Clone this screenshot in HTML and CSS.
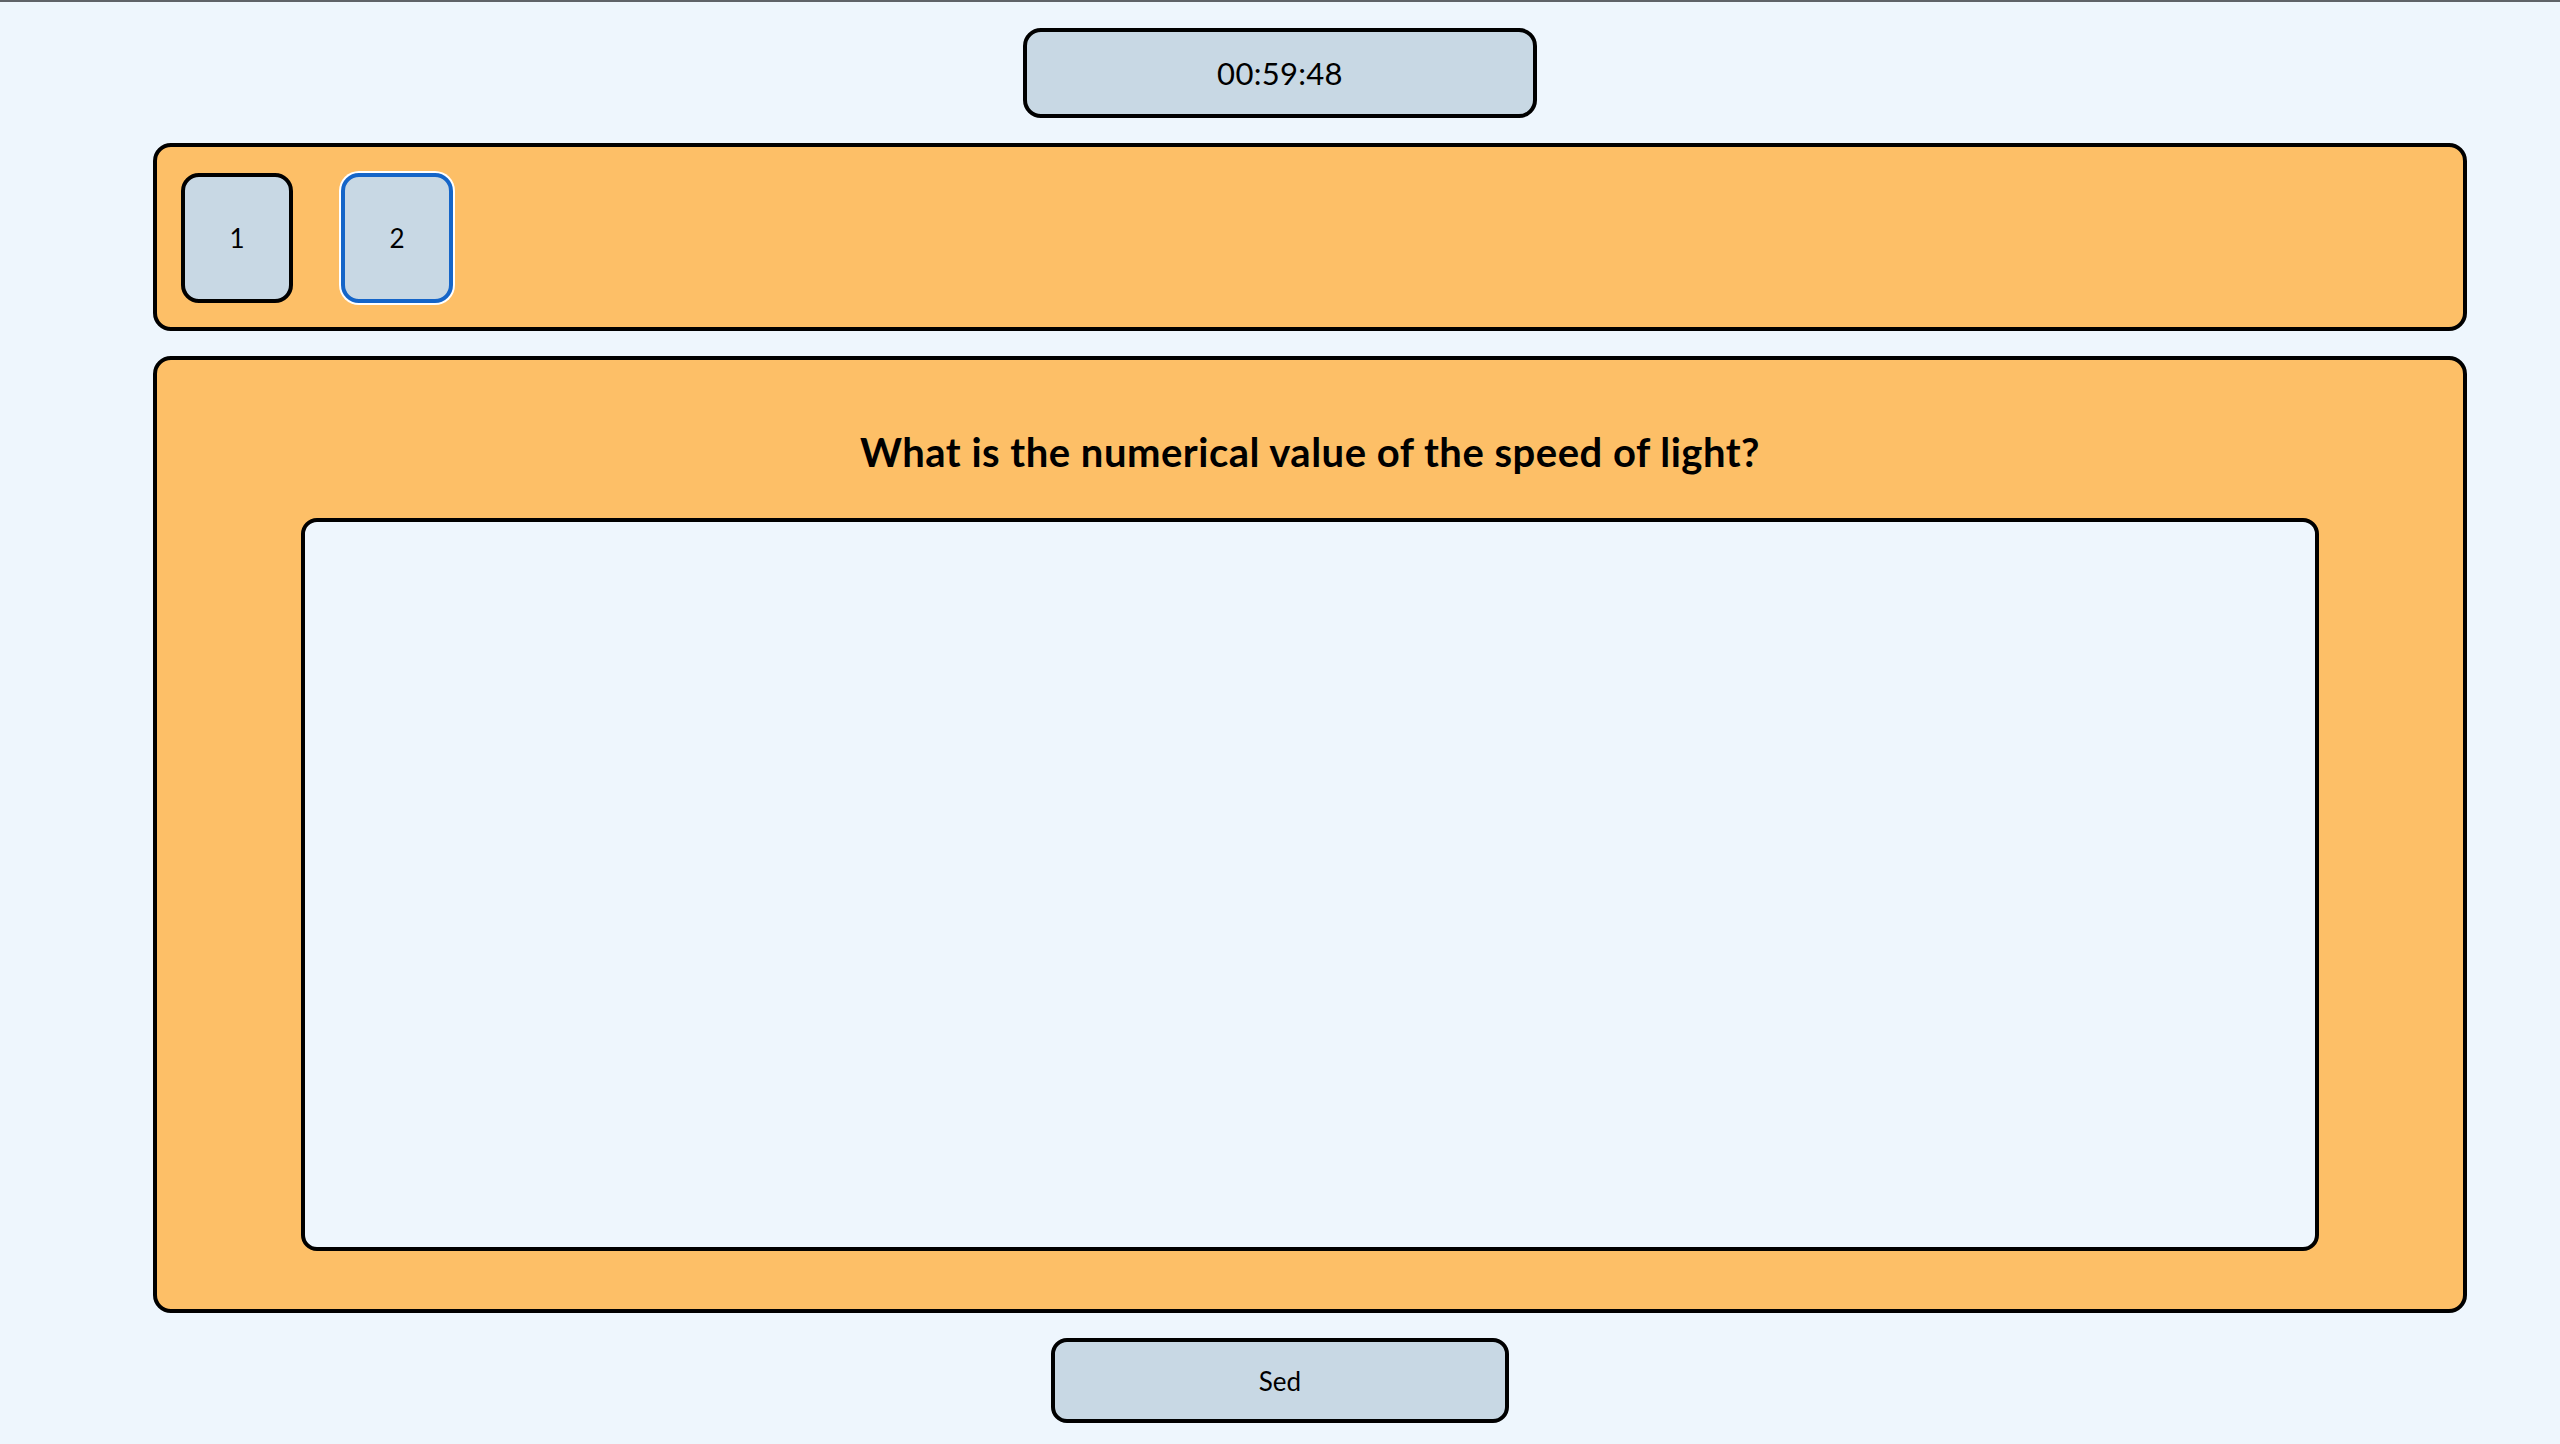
FILE: index.html
```html
<!DOCTYPE html>
<html lang="en">
<head>
<meta charset="utf-8">
<title>Quiz</title>
<link rel="stylesheet" href="styles.css">
</head>
<body>
  <div class="page">
    <div class="timer">00:59:48</div>
    <div class="panel nav">
      <button class="qbtn">1</button>
      <button class="qbtn current">2</button>
    </div>
    <div class="panel main">
      <div class="question">What is the numerical value of the speed of light?</div>
      <textarea class="answer"></textarea>
    </div>
    <button class="send">Sed</button>
  </div>
</body>
</html>
```
FILE: styles.css
```css
html, body {
  margin: 0;
  padding: 0;
}
body {
  background: #eef6fd;
  border-top: 2px solid #5f6368;
  font-family: "Lato", "Open Sans", sans-serif;
  color: #000;
  height: 1442px;
  overflow: hidden;
}
.page {
  display: flex;
  flex-direction: column;
  align-items: center;
  padding-top: 26px;
}
.timer {
  box-sizing: border-box;
  width: 514px;
  height: 90px;
  background: #c8d8e4;
  border: 4px solid #000;
  border-radius: 18px;
  display: flex;
  align-items: center;
  justify-content: center;
  font-size: 31px;
  letter-spacing: 0.3px;
}
.panel {
  box-sizing: border-box;
  width: 2314px;
  margin-left: 60px;
  background: #fdbf67;
  border: 4px solid #000;
  border-radius: 18px;
}
.nav {
  margin-top: 25px;
  height: 188px;
  padding: 26px 24px 24px 24px;
  display: flex;
  gap: 48px;
}
.qbtn {
  box-sizing: border-box;
  width: 112px;
  height: 130px;
  background: #c8d8e4;
  border: 4px solid #000;
  border-radius: 18px;
  font-family: "Lato", "Open Sans", sans-serif;
  font-size: 26px;
  color: #000;
  padding: 0;
}
.qbtn.current {
  border-color: #1565c8;
  box-shadow: 0 0 0 2px #fff;
}
.main {
  margin-top: 25px;
  height: 957px;
  padding-top: 69px;
  display: flex;
  flex-direction: column;
  align-items: center;
}
.question {
  font-size: 40px;
  line-height: 46px;
  font-weight: 700;
  letter-spacing: 0.5px;
  text-align: center;
}
.answer {
  box-sizing: border-box;
  margin-top: 43px;
  width: 2018px;
  height: 733px;
  background: #eef6fd;
  border: 4px solid #000;
  border-radius: 16px;
  resize: none;
  outline: none;
  font-family: "Lato", "Open Sans", sans-serif;
  font-size: 26px;
}
.send {
  box-sizing: border-box;
  margin-top: 25px;
  width: 458px;
  height: 85px;
  background: #c8d8e4;
  border: 4px solid #000;
  border-radius: 16px;
  font-family: "Lato", "Open Sans", sans-serif;
  font-size: 26px;
  color: #000;
}
```
